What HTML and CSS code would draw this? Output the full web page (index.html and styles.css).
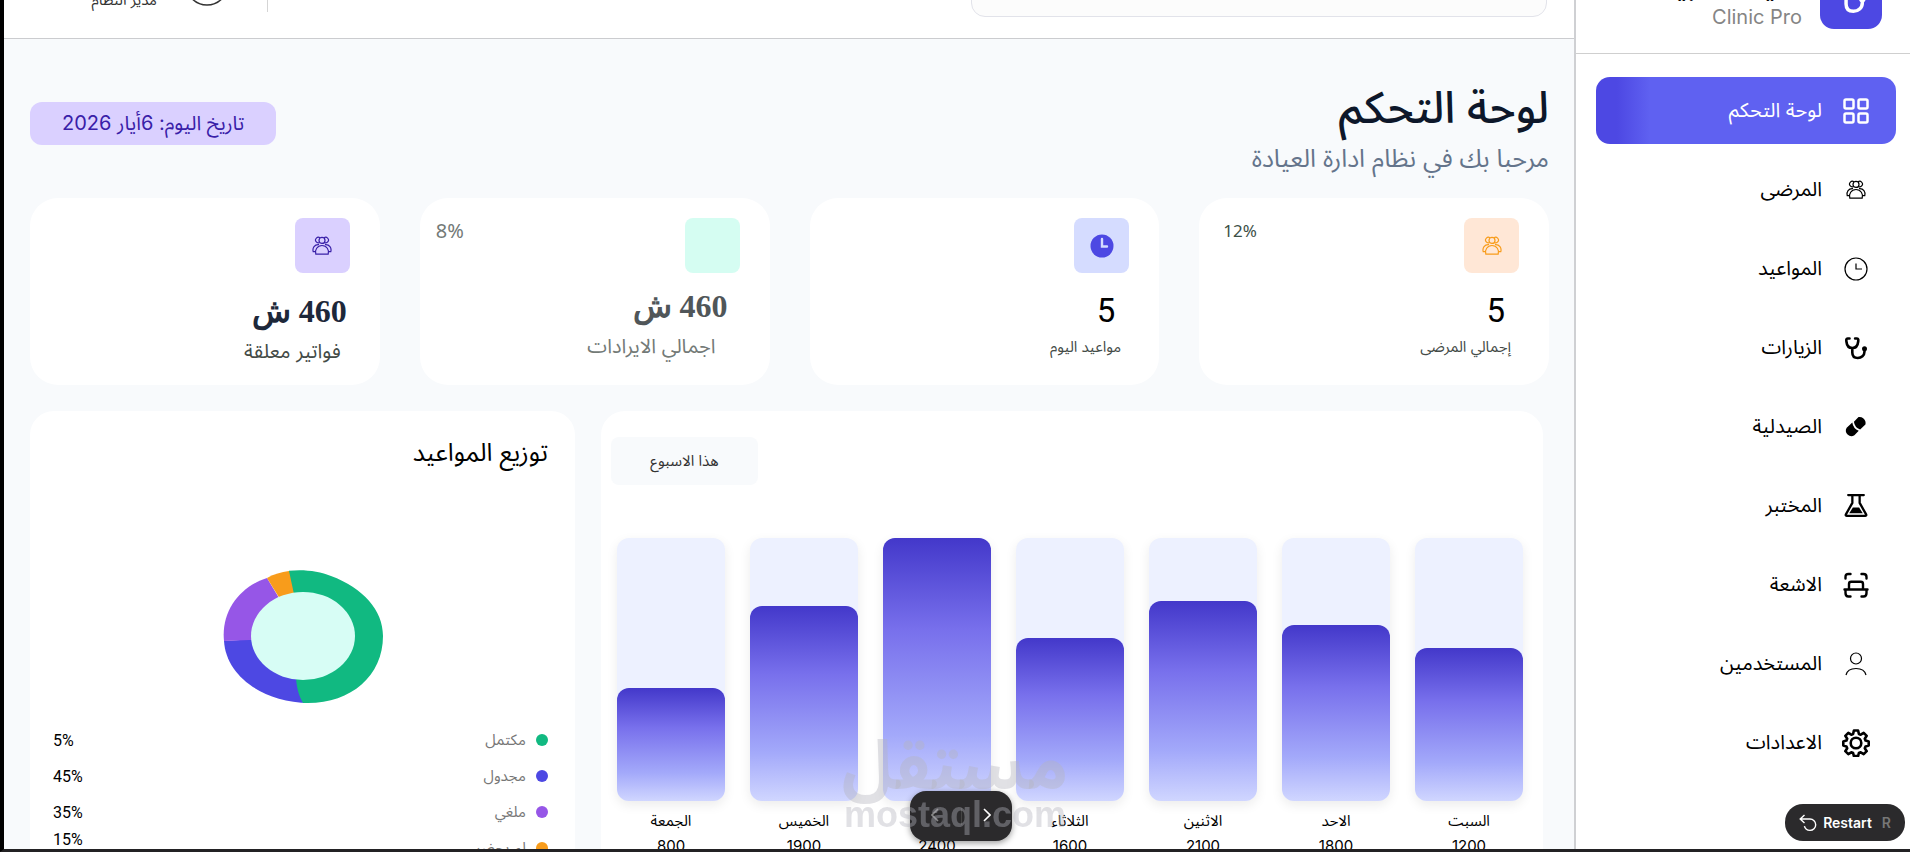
FILE: index.html
```html
<!DOCTYPE html>
<html lang="ar" dir="rtl">
<head>
  <meta charset="UTF-8" />
  <meta name="viewport" content="width=device-width, initial-scale=1" />
  <title>لوحة التحكم - Clinic Pro</title>
  <link rel="stylesheet" href="styles.css">
</head>
<body>
  <svg class="sprite" aria-hidden="true">
    <symbol id="icon-people" viewBox="0 0 20 20">
      <g fill="none" stroke="currentColor" stroke-width="1.2">
        <circle cx="10" cy="4.4" r="3" />
        <path d="M7.600 6.400A2.700 2.700 0 1 1 8 2M12.400 6.400A2.700 2.700 0 1 0 12 2" />
        <path d="M3.800 18.200c-1.300-4.200 1.500-8.700 6.200-8.700s7.500 4.500 6.200 8.700z" />
        <path d="M3.400 15.700H1.200C.2 12 2.500 8.200 7 8.700M16.600 15.700h2.200c1-3.700-1.300-7.500-5.800-7" />
      </g>
    </symbol>
    <symbol id="icon-stethoscope" viewBox="0 0 24 24">
      <path d="M5.500 2.500H3.600c-1.400 0-1.400 1.500-1.200 3C2.800 9.500 5 12 8.300 12s5.500-2.500 5.900-6.500c.2-1.500.2-3-1.200-3h-1.900M8.300 12v4.500c0 3.500 2 5.500 5.500 5.500s6.700-2.500 6.700-6.500v-1.500" fill="none" stroke="currentColor" stroke-width="2.600" stroke-linecap="round" />
      <circle cx="20.500" cy="12.800" r="2.500" fill="currentColor" />
    </symbol>
  </svg>

  <div class="page">
    <aside class="sidebar">
      <div class="brand">
        <div class="brand-logo"><svg width="32" height="32"><use href="#icon-stethoscope" /></svg></div>
        <div class="brand-text">
          <strong>العيادة الطبية</strong>
          <span>Clinic Pro</span>
        </div>
      </div>
      <nav class="menu">
        <a href="#" class="active">
          <svg width="26" height="26" viewBox="0 0 26 26" fill="none" stroke="currentColor" stroke-width="2.500"><rect x="1.500" y="1.500" width="9" height="9" rx="1.500" /><rect x="15.500" y="1.500" width="9" height="9" rx="1.500" /><rect x="1.500" y="15.500" width="9" height="9" rx="1.500" /><rect x="15.500" y="15.500" width="9" height="9" rx="1.500" /></svg>
          <span>لوحة التحكم</span>
        </a>
        <a href="#">
          <svg width="20" height="20"><use href="#icon-people" /></svg>
          <span>المرضى</span>
        </a>
        <a href="#">
          <svg width="24" height="24" viewBox="0 0 24 24" fill="none" stroke="currentColor" stroke-width="1.200"><circle cx="12" cy="12" r="11" /><path d="M12 6.500V12h6" /></svg>
          <span>المواعيد</span>
        </a>
        <a href="#">
          <svg width="24" height="24"><use href="#icon-stethoscope" /></svg>
          <span>الزيارات</span>
        </a>
        <a href="#">
          <svg width="23" height="23" viewBox="0 0 20 20" fill="currentColor"><path d="M8.200 5.800l4-4a5.300 5.300 0 0 1 6 6.500l-4.600 4.200a8 8 0 0 1-5.400-6.700z" /><path d="M6.800 6.500a9 9 0 0 0 5.600 7.200l-3.800 4A4.900 4.900 0 0 1 1.900 11z" /></svg>
          <span>الصيدلية</span>
        </a>
        <a href="#">
          <svg width="25" height="25" viewBox="0 0 24 24"><path d="M4.500 2h15M8.500 2v7.500L2.300 20.500c-.5.900 0 1.500.9 1.500h17.600c.9 0 1.400-.6.900-1.500L15.500 9.500V2" fill="none" stroke="currentColor" stroke-width="2.200" stroke-linecap="round" /><path d="M9 14h6l3.500 5.500h-13z" fill="currentColor" /></svg>
          <span>المختبر</span>
        </a>
        <a href="#">
          <svg width="26" height="26" viewBox="0 0 26 26" fill="none" stroke="currentColor" stroke-width="2.400" stroke-linecap="round"><path d="M2.500 6.500V5c0-2 1-3 3-3h2M18.500 2h2c2 0 3 1 3 3v1.500M1.500 17.500h23M6 17V12c0-1.500.7-2.200 2.200-2.200h9.600c1.500 0 2.200.7 2.200 2.200v5M2.500 18v3c0 2 1 3.500 3 3.500h2M18.500 24.500h2c2 0 3-1.500 3-3.500v-3" /></svg>
          <span>الاشعة</span>
        </a>
        <a href="#">
          <svg width="22" height="24" viewBox="0 0 22 24" fill="none" stroke="currentColor" stroke-width="1.200"><circle cx="11" cy="6.500" r="5.500" /><path d="M1 23c1-4.500 5-6.500 10-6.500s9 2 10 6.500" /></svg>
          <span>المستخدمين</span>
        </a>
        <a href="#">
          <svg width="28" height="28" viewBox="0 0 28 28" fill="none" stroke="currentColor" stroke-width="2.600" stroke-linejoin="round"><circle cx="14" cy="14" r="5.300" /><path d="M11.900 1.500h4.200l.8 3.500 1.800.7 3-1.900 3 3-1.900 3 .8 1.800 3.100.8v4.200l-3.100.8-.8 1.800 1.900 3-3 3-3-1.900-1.800.7-.8 3.100h-4.200l-.8-3.100-1.800-.7-3 1.900-3-3 1.900-3-.8-1.800-3.100-.8v-4.200l3.100-.8.8-1.800-1.900-3 3-3 3 1.900 1.800-.7z" /></svg>
          <span>الاعدادات</span>
        </a>
      </nav>
    </aside>

    <main class="main">
      <header class="topbar">
        <input class="search" type="search" aria-label="بحث">
        <div class="user">
          <svg width="44" height="44" viewBox="0 0 44 44" fill="none" stroke="currentColor" stroke-width="1.500"><circle cx="22" cy="22" r="21" /></svg>
          <span>مدير النظام</span>
        </div>
      </header>

      <div class="content">
        <div class="page-head">
          <div>
            <h1>لوحة التحكم</h1>
            <p>مرحبا بك في نظام ادارة العيادة</p>
          </div>
          <div class="today">تاريخ اليوم: 6أيار 2026</div>
        </div>

        <section class="stats">
          <article class="stat patients">
            <div class="stat-icon"><svg width="20" height="20"><use href="#icon-people" /></svg></div>
            <span class="stat-change" dir="ltr">12%</span>
            <div class="stat-body">
              <div class="stat-value">5</div>
              <div class="stat-label">إجمالي المرضى</div>
            </div>
          </article>
          <article class="stat visits">
            <div class="stat-icon"><svg width="24" height="24" viewBox="0 0 24 24"><circle cx="12" cy="12" r="11.500" fill="currentColor" /><path d="M12 5v7.500h5" fill="none" stroke="#d5dcff" stroke-width="2.400" stroke-linecap="round" /></svg></div>
            <div class="stat-body">
              <div class="stat-value">5</div>
              <div class="stat-label">مواعيد اليوم</div>
            </div>
          </article>
          <article class="stat money revenue">
            <div class="stat-icon"></div>
            <span class="stat-change" dir="ltr">8%</span>
            <div class="stat-body">
              <div class="stat-value">460 ش</div>
              <div class="stat-label">اجمالي الايرادات</div>
            </div>
          </article>
          <article class="stat money invoices">
            <div class="stat-icon"><svg width="20" height="20"><use href="#icon-people" /></svg></div>
            <div class="stat-body">
              <div class="stat-value">460 ش</div>
              <div class="stat-label">فواتير معلقة</div>
            </div>
          </article>
        </section>

        <div class="panels">
          <section class="panel chart">
            <button type="button" class="period">هذا الاسبوع</button>
            <div class="bars">
              <div class="bar"><div class="track"><div class="fill" style="height: 58%"></div></div><span>السبت</span><b>1200</b></div>
              <div class="bar"><div class="track"><div class="fill" style="height: 67%"></div></div><span>الاحد</span><b>1800</b></div>
              <div class="bar"><div class="track"><div class="fill" style="height: 76%"></div></div><span>الاثنين</span><b>2100</b></div>
              <div class="bar"><div class="track"><div class="fill" style="height: 62%"></div></div><span>الثلاثاء</span><b>1600</b></div>
              <div class="bar"><div class="track"><div class="fill" style="height: 100%"></div></div><span>الاربعاء</span><b>2400</b></div>
              <div class="bar"><div class="track"><div class="fill" style="height: 74%"></div></div><span>الخميس</span><b>1900</b></div>
              <div class="bar"><div class="track"><div class="fill" style="height: 43%"></div></div><span>الجمعة</span><b>800</b></div>
            </div>
          </section>

          <section class="panel split">
            <h2>توزيع المواعيد</h2>
            <svg class="donut" width="160" height="133" viewBox="0 0 160 133">
              <path fill="#4d48e3" d="M86 133C38 132 3 105 1 71l79-5z" />
              <path fill="#11b981" d="M66 .800C80-1 96 1 108 6c32 12 52 34 52 60 0 40-32 67-75 67h-5c-4-7-6-14-7-24L66 66z" />
              <path fill="#9656e7" d="M1 71C-2 42 16 17 44 8l36 60z" />
              <path fill="#f89c1b" d="M44 8c7-4 14-6 22-7l14 65z" />
              <ellipse cx="80" cy="66" rx="52" ry="44" fill="#d7fdf5" />
            </svg>
            <ul class="legend">
              <li class="done"><span>مكتمل</span><b dir="ltr">5%</b></li>
              <li class="planned"><span>مجدول</span><b dir="ltr">45%</b></li>
              <li class="cancelled"><span>ملغي</span><b dir="ltr">35%</b></li>
              <li class="missed"><span>لم يحضر</span><b dir="ltr">15%</b></li>
            </ul>
          </section>
        </div>
      </div>
    </main>
  </div>

  <div class="pager">
    <button type="button" aria-label="التالي"><svg width="8" height="14" viewBox="0 0 8 14" fill="none" stroke="currentColor" stroke-width="1.600"><path d="M1 1l6 6-6 6" /></svg></button>
    <button type="button" aria-label="السابق" disabled><svg width="8" height="14" viewBox="0 0 8 14" fill="none" stroke="currentColor" stroke-width="1.600"><path d="M7 1L1 7l6 6" /></svg></button>
  </div>
  <div class="watermark"><span>مستقل</span><span>mostaql.com</span></div>
  <button type="button" class="restart" dir="ltr">
    <svg width="18" height="18" viewBox="0 0 18 18" fill="none" stroke="currentColor" stroke-width="1.400"><path d="M5.500 1L1.200 5l4.300 4M1.200 5h9.800a5.700 5.700 0 0 1 0 11.400c-3 0-5-1.800-5.600-4.200" /></svg>
    Restart <kbd>R</kbd>
  </button>
</body>
</html>
```

FILE: styles.css
```css
* {
  box-sizing: border-box;
}
body {
  margin: 0;
  font-family: Inter, "Noto Sans Arabic", "Noto Sans", sans-serif;
  color: #000;
  background: #f8fafc;
}
a {
  color: inherit;
  text-decoration: none;
}
button {
  font-family: inherit;
  border: none;
  cursor: pointer;
}
.sprite {
  position: absolute;
  width: 0;
  height: 0;
}
.page {
  display: flex;
  height: 100vh;
  overflow: hidden;
  border-left: 4px solid #000;
  border-bottom: 3px solid #232224;
}

/* sidebar */
.sidebar {
  flex: 0 0 336px;
  background: #fff;
  border-left: 2px solid #cfd0d3;
}
.brand {
  display: flex;
  align-items: flex-end;
  gap: 18px;
  height: 54px;
  padding: 0 28px 24px;
  border-bottom: 1px solid #cfcfcf;
}
.brand-logo {
  display: flex;
  align-items: center;
  justify-content: center;
  width: 62px;
  height: 62px;
  border-radius: 14px;
  background: #4d48e3;
  color: #fff;
}
.brand-text {
  display: flex;
  flex-direction: column;
  line-height: 24px;
}
.brand-text strong {
  margin-bottom: 6px;
  font-size: 24px;
}
.brand-text span {
  font-size: 20px;
  color: #858585;
}
.menu {
  display: flex;
  flex-direction: column;
  gap: 12px;
  padding: 23px 14px 0 20px;
}
.menu a {
  display: flex;
  align-items: center;
  gap: 20px;
  height: 67px;
  padding: 0 26px;
  border-radius: 14px;
  font-size: 20px;
}
.menu svg {
  flex: none;
}
.menu a svg {
  width: 28px;
}
.menu .active {
  color: #fff;
  background: linear-gradient(90deg, #4d48e3 7%, #5f61f1 18%);
}

/* main column */
.main {
  flex: 1;
  min-width: 0;
}
.topbar {
  display: flex;
  align-items: flex-end;
  justify-content: space-between;
  height: 39px;
  padding: 0 27px 21px;
  background: #fff;
  border-bottom: 1px solid #cbcccf;
}
.search {
  width: 576px;
  height: 48px;
  border: 1px solid #e2e3ea;
  border-radius: 14px;
  background: #fcfcfc;
}
.user {
  display: flex;
  gap: 28px;
  height: 50px;
  width: 237px;
  margin-bottom: 5px;
  padding-right: 38px;
  border-right: 1px solid #d5d5d5;
  font-size: 15px;
  line-height: 24px;
  color: #333;
}
.user span {
  align-self: flex-end;
}
.content {
  padding: 0 25px 0 26px;
}
.page-head {
  display: flex;
  align-items: flex-start;
  justify-content: space-between;
  height: 159px;
  padding-top: 40px;
}
h1 {
  margin: 0;
  font-size: 44px;
  font-weight: 500;
  line-height: 56px;
  color: #0d172a;
}
.page-head p {
  margin: 5px 0 0;
  font-size: 25px;
  line-height: 36px;
  color: #64748b;
}
.today {
  margin-top: 23px;
  padding: 0 32px;
  border-radius: 12px;
  font-size: 20px;
  line-height: 43px;
  color: #3920a8;
  background: #dad0ff;
}

/* stat cards */
.stats {
  display: grid;
  grid-template-columns: repeat(4, 1fr);
  gap: 40px;
}
.stat {
  display: flex;
  flex-wrap: wrap;
  justify-content: space-between;
  align-items: flex-start;
  align-content: flex-start;
  height: 187px;
  padding: 20px 30px 0 24px;
  border-radius: 28px;
  background: #fff;
}
.stat-icon {
  display: flex;
  align-items: center;
  justify-content: center;
  width: 55px;
  height: 55px;
  border-radius: 8px;
}
.stat-change {
  font-family: "Noto Sans", sans-serif;
  font-size: 17px;
  line-height: 26px;
  color: #3d4f47;
}
.stat-body {
  width: 100%;
  margin-top: 16px;
  padding-right: 8px;
}
.stat-value {
  padding-right: 6px;
  font-family: Roboto, sans-serif;
  font-size: 33px;
  line-height: 44px;
}
.stat-label {
  font-size: 15px;
  line-height: 28px;
  color: #444b47;
}
.money .stat-body {
  padding-right: 3px;
}
.money .stat-value {
  padding: 0;
  font-family: "Liberation Serif", serif;
  font-size: 32px;
  font-weight: bold;
  color: #1d283a;
}
.money .stat-label {
  padding-right: 6px;
  font-size: 20px;
  line-height: 36px;
}
.patients .stat-icon {
  color: #f89c1b;
  background: #ffe7d6;
}
.visits .stat-icon {
  color: #4d48e3;
  background: #d5dcff;
}
.revenue {
  padding-left: 16px;
}
.revenue .stat-icon {
  background: #d5fdf2;
}
.revenue .stat-body {
  margin-top: 11px;
  padding-right: 12px;
}
.revenue .stat-value {
  color: #505659;
}
.revenue .stat-label,
.revenue .stat-change {
  color: #737a77;
}
.revenue .stat-label {
  padding-right: 12px;
}
.revenue .stat-change {
  font-size: 20px;
}
.invoices .stat-icon {
  color: #3920a8;
  background: #dad0ff;
}

/* panels */
.panels {
  display: grid;
  grid-template-columns: 942fr 545fr;
  gap: 26px;
  padding: 26px 6px 0 0;
}
.panel {
  height: 480px;
  border-radius: 24px;
  background: #fff;
}
.chart {
  padding: 26px 20px 0 16px;
}
.period {
  display: block;
  width: 147px;
  height: 48px;
  margin: 0 auto 53px -6px;
  border-radius: 8px;
  font-size: 15px;
  color: #333;
  background: #f8fafc;
}
.bars {
  display: flex;
  justify-content: space-between;
}
.bar {
  display: flex;
  flex-direction: column;
  align-items: center;
  width: 108px;
  font-size: 15px;
}
.track {
  display: flex;
  align-items: flex-end;
  width: 100%;
  height: 263px;
  margin-bottom: 7px;
  border-radius: 12px;
  background: #edf1ff;
  box-shadow: 0 4px 12px rgba(0, 0, 0, 0.08);
}
.fill {
  width: 100%;
  border-radius: 12px;
  background: linear-gradient(#4338ca, #7870ec 35%, #a3a9fa 75%, #d0d6ff);
}
.bar span {
  line-height: 26px;
}
.bar b {
  font-weight: normal;
  line-height: 24px;
}
.split {
  padding: 20px 27px 0;
}
.split h2 {
  margin: 0 0 97px;
  font-size: 25px;
  font-weight: normal;
  line-height: 42px;
}
.donut {
  display: block;
  margin: 0 auto;
}
.legend {
  margin: 19px 0 0 -4px;
  padding: 0;
  list-style: none;
}
.legend li {
  display: flex;
  align-items: center;
  gap: 10px;
  height: 36px;
}
.legend li::before {
  content: "";
  width: 12px;
  height: 12px;
  border-radius: 50%;
  background: currentColor;
}
.legend span {
  font-size: 15px;
  color: #777;
}
.legend b {
  margin-right: auto;
  font-family: Roboto, sans-serif;
  font-size: 16px;
  font-weight: normal;
  color: #000;
}
.done {
  color: #11b981;
}
.planned {
  color: #4d48e3;
}
.cancelled {
  color: #9656e7;
}
.missed {
  color: #f89c1b;
}
.legend .missed b {
  align-self: flex-start;
}

/* floating controls */
.pager,
.restart {
  position: fixed;
  bottom: 11px;
  display: flex;
  align-items: center;
  color: #fff;
  background: #2b2a2c;
}
.pager {
  left: 50%;
  width: 102px;
  height: 50px;
  margin-left: -45px;
  border-radius: 16px;
  box-shadow: 0 2px 6px rgba(0, 0, 0, 0.4);
}
.pager button {
  flex: 1;
  padding: 0;
  color: #fff;
  background: none;
}
.pager button:disabled {
  border-right: 1px solid #444;
  color: #888;
}
.restart {
  right: 5px;
  gap: 6px;
  height: 37px;
  padding: 0 14px;
  border-radius: 18px;
  font-size: 14px;
  font-weight: 600;
}
.restart kbd {
  margin-left: 4px;
  font-family: inherit;
  color: #777;
}
.watermark {
  position: fixed;
  left: 50%;
  bottom: 15px;
  display: flex;
  flex-direction: column;
  align-items: center;
  width: 224px;
  margin-left: -112px;
  font-family: "Liberation Sans", "Noto Sans Arabic", sans-serif;
  font-size: 36px;
  font-weight: bold;
  line-height: 44px;
  color: rgba(180, 180, 190, 0.4);
  pointer-events: none;
}
.watermark span:first-child {
  font-size: 68px;
  line-height: 56px;
}
```
